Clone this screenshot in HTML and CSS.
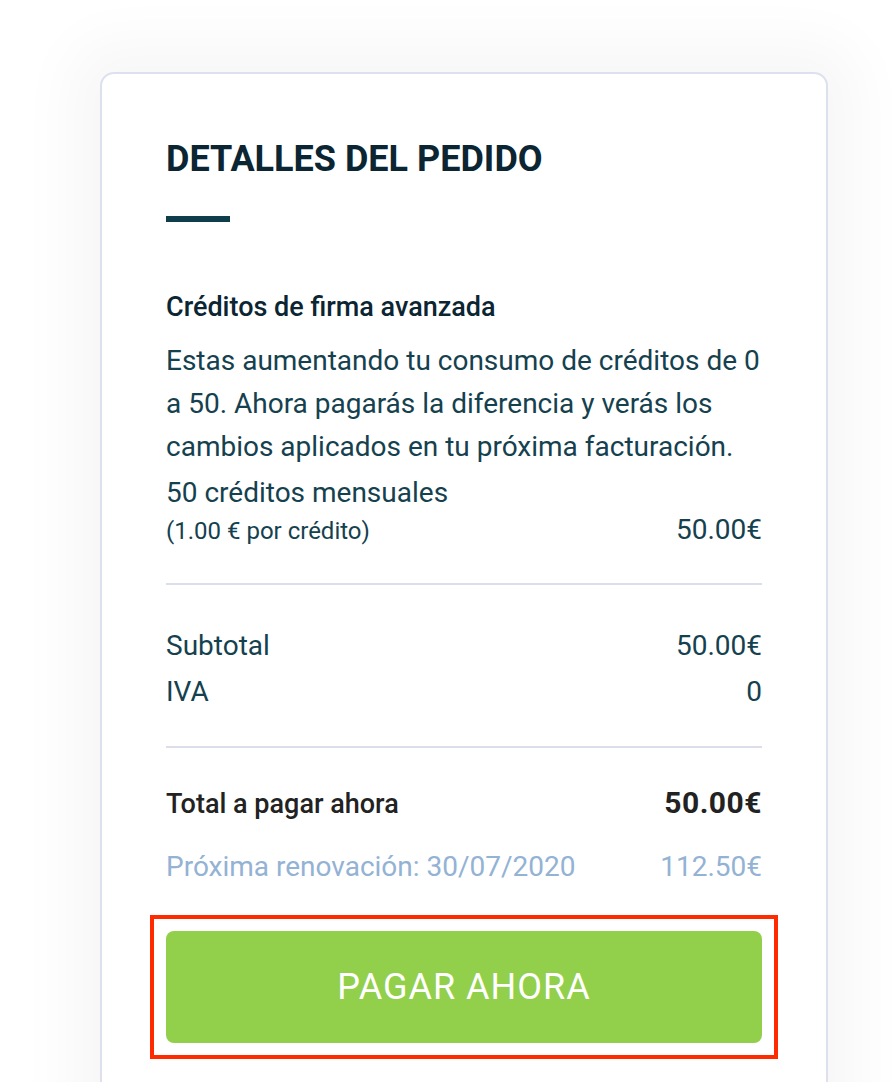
FILE: index.html
```html
<!DOCTYPE html>
<html lang="es">
<head>
    <meta charset="UTF-8">
    <title>Detalles del pedido</title>

    <link rel="stylesheet" href="styles.css">
</head>
<body>

    <main class="page">
        <section class="card">
            <h1 class="card-title">DETALLES DEL PEDIDO</h1>
            <div class="title-bar"></div>

            <div class="item">
                <h2 class="item-name">Créditos de firma avanzada</h2>
                <p class="item-desc">Estas aumentando tu consumo de créditos de 0 a 50. Ahora pagarás la diferencia y verás los cambios aplicados en tu próxima facturación.</p>
                <div class="item-qty">50 créditos mensuales</div>
                <div class="row price-row">
                    <span class="unit-price">(1.00 € por crédito)</span>
                    <span>50.00€</span>
                </div>
            </div>

            <hr class="divider divider-first">

            <div class="row sum-row">
                <span>Subtotal</span>
                <span>50.00€</span>
            </div>
            <div class="row sum-row">
                <span>IVA</span>
                <span>0</span>
            </div>

            <hr class="divider divider-second">

            <div class="row total-row">
                <span class="total-label">Total a pagar ahora</span>
                <span class="total-amount">50.00€</span>
            </div>
            <div class="row renew-row">
                <span>Próxima renovación: 30/07/2020</span>
                <span>112.50€</span>
            </div>

            <div class="highlight">
                <button class="pay-btn">PAGAR AHORA</button>
            </div>
        </section>
    </main>

</body>
</html>
```

FILE: styles.css
```css
body {
    margin: 0;
    padding: 0;
    background: #ffffff;
    font-family: Roboto, "Noto Sans", sans-serif;
    color: #15414f;
    overflow: hidden;
}

.page {
    padding: 72px 0 0 100px;
}

.card {
    width: 596px;
    padding: 64px 64px 80px 64px;
    background: #ffffff;
    border: 2px solid #dde1ee;
    border-radius: 14px;
    box-shadow: 0 0 60px 30px rgba(0, 0, 0, 0.035);
}

.card-title {
    margin: 0;
    font-size: 36px;
    font-weight: 700;
    line-height: 42px;
    color: #0b2532;
}

.title-bar {
    width: 64px;
    height: 6px;
    margin-top: 36px;
    background: #0f3d4c;
}

.item {
    margin-top: 69px;
}

.item-name {
    margin: 0;
    font-size: 27px;
    font-weight: 500;
    line-height: 32px;
    color: #0b2532;
}

.item-desc {
    margin: 16px 0 0 0;
    font-size: 28px;
    line-height: 43px;
}

.item-qty {
    margin-top: 8px;
    font-size: 28px;
    line-height: 34px;
}

.row {
    display: flex;
    justify-content: space-between;
    align-items: baseline;
    font-size: 28px;
    line-height: 34px;
}

.price-row {
    margin-top: 3px;
}

.unit-price {
    font-size: 24px;
}

.divider {
    border: none;
    border-top: 2px solid #dcdeeb;
}

.divider-first {
    margin: 35px 0 38px 0;
}

.divider-second {
    margin: 31px 0 35px 0;
}

.sum-row {
    line-height: 46px;
}

.total-row {
    line-height: 40px;
}

.total-label {
    font-size: 27px;
    font-weight: 500;
    color: #222222;
}

.total-amount {
    font-size: 30px;
    font-weight: 700;
    letter-spacing: 0.5px;
    color: #222222;
}

.renew-row {
    margin-top: 26px;
    color: #93b2d4;
}

.highlight {
    margin: 31px -16px 0 -16px;
    padding: 12px;
    border: 4px solid #ff2a00;
}

.pay-btn {
    display: block;
    width: 100%;
    height: 112px;
    border: none;
    border-radius: 8px;
    background: #92cf4b;
    color: #ffffff;
    font-family: Roboto, "Noto Sans", sans-serif;
    font-size: 36px;
    letter-spacing: 1px;
}
```
